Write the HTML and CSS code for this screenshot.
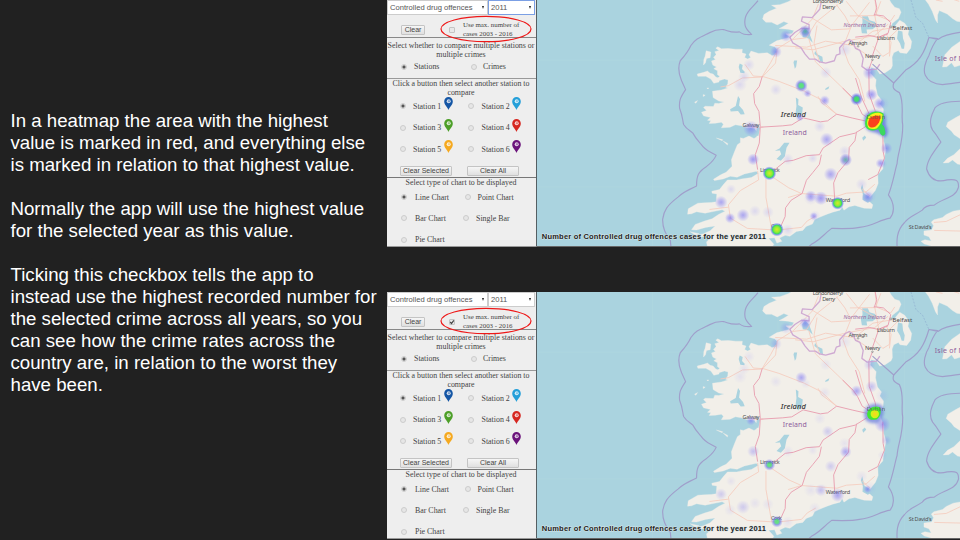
FILE: index.html
```html
<!DOCTYPE html>
<html lang="en">
<head>
<meta charset="utf-8">
<title>Heatmap maximum value</title>
<link rel="stylesheet" href="styles.css">
</head>
<body>
<svg class="defs" width="0" height="0" aria-hidden="true">
  <defs>
    <radialGradient id="faint"><stop offset="0" stop-color="#8078ff" stop-opacity=".2"/><stop offset="1" stop-color="#8078ff" stop-opacity="0"/></radialGradient>
    <radialGradient id="blue"><stop offset="0" stop-color="#6860f5" stop-opacity=".52"/><stop offset=".4" stop-color="#7870f5" stop-opacity=".38"/><stop offset="1" stop-color="#8078ff" stop-opacity="0"/></radialGradient>
    <radialGradient id="green"><stop offset="0" stop-color="#40e860"/><stop offset=".36" stop-color="#48d080"/><stop offset=".55" stop-color="#5a70e0" stop-opacity=".8"/><stop offset="1" stop-color="#8078ff" stop-opacity="0"/></radialGradient>
    <radialGradient id="teal"><stop offset="0" stop-color="#48a890" stop-opacity=".8"/><stop offset=".3" stop-color="#5a8cc0" stop-opacity=".7"/><stop offset=".55" stop-color="#7578e0" stop-opacity=".55"/><stop offset="1" stop-color="#8078ff" stop-opacity="0"/></radialGradient>
    <radialGradient id="yellow"><stop offset="0" stop-color="#d8e828"/><stop offset=".4" stop-color="#90ec34"/><stop offset=".62" stop-color="#3cdc60"/><stop offset=".76" stop-color="#5080e0" stop-opacity=".7"/><stop offset="1" stop-color="#8078ff" stop-opacity="0"/></radialGradient>
    <g id="pin"><path d="M4.500 13C3.700 10 .2 8 .2 4.400a4.300 4.300 0 0 1 8.600 0C8.800 8 5.300 10 4.500 13Z"/><circle cx="4.700" cy="4.200" r="2" fill="#fff" opacity=".8"/><path d="M5 3.300v1.800" stroke="currentColor" stroke-width=".9"/></g>

    <g id="basemap" transform="translate(680 -2) scale(.33333)">
      <path class="tile" d="M-84 0V760M-430 187H840M294 0V760M676 0V760M-430 569H840"/>
      <g class="land">
        <path d="M345 0L325 11L300 20L275 22L290 31L268 40L252 50L248 63L258 73L275 73L292 81L312 71L326 76L310 86L298 92L325 94L342 98L337 108L318 108L330 118L316 122L290 129L268 142L284 147L292 154L291 170L276 173L262 165L236 167L213 160L207 171L212 179L203 184L194 179L198 169L186 165L187 154L166 154L145 152L124 153L113 147L107 151L117 158L104 162L108 170L100 179L106 185L94 190L98 202L109 208L101 213L112 219L112 231L119 236L112 242L114 250L133 244L144 247L143 258L137 269L143 271L124 277L97 281L99 300L116 310L132 313L116 318L104 317L100 327L75 326L70 330L79 339L64 344L70 355L91 360L82 368L92 370L87 378L106 377L124 374L130 380L124 391L150 389L166 382L185 385L202 391L223 392L234 406L230 419L222 423L207 416L190 423L181 421L181 435L172 442L163 464L154 487L156 507L138 525L123 532L100 546L103 550L129 545L151 537L171 540L193 530L229 522L236 528L214 541L184 545L170 548L142 548L130 562L118 577L95 582L96 588L110 590L108 614L93 616L73 617L53 618L24 635L22 651L34 650L49 644L75 648L95 644L126 638L135 642L115 652L96 665L73 672L45 682L34 698L49 699L76 691L105 687L90 701L70 710L35 719L52 724L74 717L94 719L79 735L82 750V760H270L282 742L266 724L284 722L291 738L306 733L299 723L316 715L330 718L350 703L369 700L379 688L398 681L405 667L421 660L442 651L459 645L481 639L488 629L493 639L508 629L526 625L554 633L577 634L580 623L566 610L573 598L588 579L596 559L595 532L610 515L615 477L620 456L612 430L614 410L604 387L599 367L611 350L612 334L601 319L606 307L594 292L588 264L590 246L572 226L575 210L590 213L601 229L617 225L635 213L639 204L638 178L643 165L657 158L662 165L682 167L694 151L697 131L686 109L689 94L676 76L661 67L651 79L642 92L635 90L638 77L657 62L665 43L660 32L646 28L635 14L627 0Z"/>
        <path d="M734 0L748 19L759 40L769 66L775 75L775 51L780 38L804 48L820 62L833 70L845 72V0Z"/>
        <path d="M845 129L818 148L797 171L793 191L790 208L803 207L817 195L826 208L845 202Z"/>
        <path d="M845 352L830 360L806 374L801 387L817 401L825 412L845 425V452L824 472L805 483L792 497L808 496L820 488L835 500L845 502Z"/>
        <path d="M845 638L822 642L801 652L790 661L764 668L756 675L763 686L757 699L734 702L734 714L749 719L756 732L737 728L725 733L735 741L754 746L762 760H845Z"/>
        <path d="M78 159l14 4-2 17-11 2-3 13-6 7 1-17 4-10zM51 229l20-5 11-4 8 7 9 2 8 9 8 3 2 12-16 4-9-13-15-8-24 0zM80 271l6 0-3 3zM109 422l19 5-2 3zM129 431l14 7-1 5z"/>
        <path d="M30 704l27 6-11 5zM43 314l9-5-5 8zM69 291l6 2-6 4z"/>
      </g>
      <g class="water">
        <path d="M548 55l17 0 5 12 17 5 4 13-12 9-18 1 2 12-16-1-3-18 5-14zM656 98l13 3 2 21 5 14-2 17-7 0-5-16-9-14zM343 188l9 0-3 19-4 6-4-19zM348 300l8 5-1 17 14 8-2 19-12 14-8-14 3-24zM313 436l16 0-9 15-5 26-12 13-13-5 14-14-4-12-15 1 14-7zM179 197l9 5-2 12 8 8-1 5-12-2-5-17zM174 295l6 9-3 20 12 13 5 13-12 1-8-11-22 2-2-7 17-10zM406 160l8 10 14 7 2 17-9-4-5-12-12-9zM438 272l11-6-3 8-10 3zM376 91l12 14 7 18 4 12-13-13-17-4-2-14zM548 421l8-7 4 7-9 9zM548 561l7 29 13 7 9 12-12 8-16-9 1-17-6-18zM232 380l9 11-6 25-13-4-15-8 22-3z"/>
      </g>
      <path class="minor" d="M346 150l54 6 92-25 94-18 40-34M416 18l-18 45-58 60-48 30-5 43-40 42-60 3-42 23-24 4M247 236l50 15 77 30 50 25 47 44M288 165l-16 30-25 41M338 125l42-5 30-48 66-53M398 61l57 35 53-3 62-80M387 122l20 70 82 79 41 45M470 20l26 34 18 34-24 61 17 47 32 50 17 66M500 10l34 42 65 36M604 10l-16 43-77 1M530 139l50-39 67-12M580 145l30 31 20-12 0-45 26-25M586 0l6 52 42 17 12-18M620 109l15 24-5 43M586 53l12 65M575 180l-55-37-82-13-57 18-95-5M250 389l-34 0M233 521l3 27-55 32-36 43 6 40 51 31 88 5M258 545l0 55 17 97M270 534l57 38 38 17 107 8 28-9 60-4 26-23M365 589l-40 12M408 657l-25 14-18 20-73 8M145 630l-57 7M547 574l25 24M471 350l-45-34-11-20M790 10l-20-4M840 10l-30-10M764 676l37-3 42-20M765 700l79 2M195 200l25 35 29 2M412 83l-9 53 17 60"/>
      <path class="road" d="M586 0l6 30-8 23M583 50l29 4 22 20-8 32-28 12-20 58M626 108l-29 11-26-6-44 5M579 185l-11 30 1 75 18 49 4 25M247 236l-9 30-17 22 3 30 13 24 4 45-3 50-12 35 7 45M242 389l67-4 27-3 34-21 52 12 22-3 27-20 49 12 45 10M489 271l32 31 13 19 14 29 24 15M528 241l18 59 27 58M562 385l-35 22-47 11-50 34-11 20-40 3-39 14-24 3-45 36M425 472l-6 29-20 25-19 23-13 40-33 20-17 23-1 26-12 27-14 11M531 403l-5 27-17 20-2 38-32 38-13 31 3 48M610 397l1 65 4 20-20 50-29 15"/>
      <path class="border" d="M424 14l-4 20-23 25-29-2-3 13 23 10 0 13-23-2-20 13-15 14 9 17 24 14 13 20 13 15 18 0 12 8 19 4 26-7 6-17 11-4-1-18 17-19 12-6 10 6 9 21 13 6 10 24-4 24 15 11 29-3 10-15"/>
      <path class="sea" d="M234 8C224 23 201 36 196 59C190 86 200 94 215 110C194 111 188 109 178 102C153 106 146 99 130 95C109 94 100 98 87 105C60 118 45 123 32 143C24 161 18 169 0 189C-11 216 -1 236 4 249L16 276C-1 301-4 311-2 332C8 358 6 365 10 381C20 397 31 400 38 407C48 426 54 430 63 441C75 459 84 460 108 474C99 494 86 501 77 509C54 524 49 536 49 566C27 578 10 583-6 599C-40 625-49 639-53 666C-54 690-44 713-30 730L-27 760M579 199L643 256C639 269 640 276 660 285C676 317 664 356 670 382C671 438 655 463 653 499C645 526 641 557 627 593C650 625 642 651 632 663C600 668 582 686 540 691C517 696 491 695 456 694C431 713 420 729 395 742L375 760M643 256L679 217C719 194 735 167 749 119L775 122C765 135 757 149 749 173C738 190 731 218 738 233C747 253 768 260 790 261C809 259 819 257 845 254M749 119L776 125C792 112 811 109 845 103M845 311C811 311 779 317 767 331C758 349 746 374 760 398C774 414 780 427 785 434C761 466 743 491 742 515C753 551 779 555 804 548C832 545 839 549 838 570C831 602 789 603 765 624C750 624 736 627 729 639C704 656 688 659 675 677C651 701 651 731 654 760"/>
      <path class="ferry" d="M695 6L710 59L730 76L749 119"/>
    </g>
    <g id="places">
      <text x="813" y="3.200" textLength="31">Londonderry/</text><text x="822.500" y="9" textLength="13">Derry</text>
      <text class="ni" x="844" y="26.700" textLength="42">Northern Ireland</text>
      <text class="city" x="893" y="30" textLength="20">Belfast</text><text x="877.500" y="40" textLength="18">Lisburn</text>
      <text x="849" y="45.300" textLength="19">Armagh</text><text x="865.500" y="58.300" textLength="15.500">Newry</text>
      <text x="742.500" y="127.400" textLength="17">Galway</text>
      <text x="760" y="173" textLength="20">Limerick</text><text x="826" y="202.500" textLength="24.500">Waterford</text>
      <text x="771" y="229" textLength="11">Cork</text><text x="909.500" y="230.300" textLength="23">St David's</text>
      <text class="country" x="781" y="117.500" textLength="25">Ireland</text><text class="region" x="783" y="135.500" textLength="24">Ireland</text><text class="region" x="935.500" y="60.800" textLength="39">Isle of Man</text>
      <g class="town"><circle cx="891.500" cy="27" r="1"/><circle cx="858.500" cy="46.500" r=".8"/><circle cx="873" cy="60" r=".8"/></g>
    </g>
    <g id="lowheat" fill="url(#faint)">
      <circle cx="776" cy="90" r="6"/><circle cx="825" cy="101" r="6"/><circle cx="806" cy="92" r="5"/><circle cx="820" cy="127" r="6"/><circle cx="813" cy="159" r="5"/><circle cx="744" cy="77" r="6"/><circle cx="740" cy="85" r="7"/><circle cx="754" cy="160" r="6"/><circle cx="826" cy="73" r="6"/><circle cx="845" cy="50" r="7"/><circle cx="811" cy="199" r="7"/><circle cx="768" cy="213" r="6"/><circle cx="815" cy="217" r="6"/><circle cx="731" cy="190" r="5"/><circle cx="755" cy="212" r="6"/><circle cx="788" cy="231" r="6"/><circle cx="788" cy="160" r="6"/><circle cx="845" cy="152" r="6"/><circle cx="862" cy="185" r="6"/><circle cx="870" cy="197" r="7"/><circle cx="749" cy="65" r="6"/><circle cx="883" cy="104" r="7"/><circle cx="883" cy="164" r="5"/><circle cx="822" cy="199" r="7"/><circle cx="730" cy="219" r="6"/><circle cx="872" cy="95" r="6"/>
    </g>
  </defs>
</svg>
<main class="slide">
  <section class="copy">
    <p>In a heatmap the area with the highest<br>value is marked in red, and everything else<br>is marked in relation to that highest value.</p>
    <p>Normally the app will use the highest value<br>for the selected year as this value.</p>
    <p>Ticking this checkbox tells the app to<br>instead use the highest recorded number for<br>the selected crime across all years, so you<br>can see how the crime rates across the<br>country are, in relation to the worst they<br>have been.</p>
  </section>
  <div class="shots">
    <section class="app">
      <div class="panel">
        <div class="selects"><div class="select">Controlled drug offences<i></i></div><div class="select focus">2011<i></i></div></div>
        <div class="clear"><span class="button">Clear</span><span class="check"></span><span class="max"><b>Use max. number of</b><b>cases 2003 - 2016</b></span></div>
        <div class="compare"><p>Select whether to compare multiple stations or</p><p>multiple crimes</p>
          <div class="row modes"><i class="radio on"></i><span>Stations</span><i class="radio"></i><span>Crimes</span></div></div>
        <div class="stations"><p>Click a button then select another station to</p><p>compare</p>
          <div class="row station"><i class="radio on"></i><span>Station 1</span><svg class="pin navy"><use href="#pin"/></svg><i class="radio"></i><span>Station 2</span><svg class="pin sky"><use href="#pin"/></svg></div>
          <div class="row station"><i class="radio"></i><span>Station 3</span><svg class="pin green"><use href="#pin"/></svg><i class="radio"></i><span>Station 4</span><svg class="pin red"><use href="#pin"/></svg></div>
          <div class="row station"><i class="radio"></i><span>Station 5</span><svg class="pin amber"><use href="#pin"/></svg><i class="radio"></i><span>Station 6</span><svg class="pin purple"><use href="#pin"/></svg></div>
          <div class="buttons"><span class="button">Clear Selected</span><span class="button">Clear All</span></div></div>
        <div class="charts"><p>Select type of chart to be displayed</p>
          <div class="row chart"><i class="radio on"></i><span>Line Chart</span><i class="radio"></i><span>Point Chart</span></div>
          <div class="row chart bar"><i class="radio"></i><span>Bar Chart</span><i class="radio"></i><span>Single Bar</span></div>
          <div class="row chart"><i class="radio"></i><span>Pie Chart</span></div></div>
      </div>
      <svg class="map" viewBox="537 0 423 247">
        <use href="#basemap"/><use href="#places"/><use href="#lowheat"/>
        <g fill="url(#blue)"><circle cx="776" cy="52" r="6"/><circle cx="786" cy="36" r="6"/><circle cx="870" cy="73" r="7"/><circle cx="872" cy="95" r="6"/><circle cx="825" cy="101" r="5"/><circle cx="808" cy="94" r="4"/><circle cx="827" cy="140" r="7"/><circle cx="831" cy="175" r="7"/><circle cx="751" cy="129" r="8"/><circle cx="753" cy="160" r="6"/><circle cx="721" cy="203" r="6.500"/><circle cx="743" cy="216" r="6.500"/><circle cx="730" cy="219" r="5"/><circle cx="811" cy="197" r="6"/><circle cx="821" cy="199" r="7"/><circle cx="868" cy="198" r="6"/><circle cx="881" cy="164" r="5"/><circle cx="887" cy="149" r="6"/><circle cx="814" cy="217" r="4"/><circle cx="880" cy="104" r="6"/><circle cx="800" cy="118" r="4"/></g>
        <circle cx="846" cy="160.500" r="6.500" fill="url(#teal)"/><circle cx="805.500" cy="31.500" r="6.500" fill="url(#teal)"/><circle cx="801.500" cy="86" r="6.500" fill="url(#green)" opacity=".85"/><circle cx="857" cy="99.500" r="6.500" fill="url(#green)"/>
        <circle cx="769.500" cy="174" r="7" fill="url(#yellow)"/><circle cx="838" cy="204" r="6.500" fill="url(#yellow)"/><circle cx="777" cy="230.500" r="7" fill="url(#yellow)"/>
        <path class="blob" d="M866 115c5-5 15-5 20 1 1 5-1 8 2 13 1 8-2 11-6 7-4-3-8-3-13-5-5-4-5-11-3-16z" fill="#6579df" opacity=".85"/>
        <path class="glow" d="M880 124c4 0 6 5 6 10-2 4-5 2-6-2-2-3-3-6 0-8z" fill="#3cd860"/>
        <path class="glow" d="M868 116c4-5 12-5 16-2 1 7-2 13-6 16-5 2-10 1-12-3-1-4 0-8 2-11z" fill="#3ee43e"/><path class="glow" d="M869 117c4-4 11-5 14-2 0 6-2 11-6 14-4 1-8 1-9-3-1-3 0-6 1-9z" fill="#f6f01c"/><path class="glow" d="M870 119c3-3 8-4 11-2 0 4-2 8-5 10-3 2-6 1-7-1-1-2 0-5 1-7z" fill="#fa421c"/>
        <text class="city dublin" x="867" y="119.500" textLength="19">Dublin</text>
        <text class="title" x="541" y="240" textLength="225">Number of Controlled drug offences cases for the year 2011</text>
      </svg>
      <svg class="ring" viewBox="0 0 94 30"><ellipse cx="47" cy="15" rx="45" ry="12.700"/></svg>
    </section>
    <section class="app">
      <div class="panel">
        <div class="selects"><div class="select">Controlled drug offences<i></i></div><div class="select">2011<i></i></div></div>
        <div class="clear"><span class="button">Clear</span><span class="check"><svg viewBox="0 0 6 6"><path d="M1.200 3l1.300 1.500L4.800 1.300"/></svg></span><span class="max"><b>Use max. number of</b><b>cases 2003 - 2016</b></span></div>
        <div class="compare"><p>Select whether to compare multiple stations or</p><p>multiple crimes</p>
          <div class="row modes"><i class="radio on"></i><span>Stations</span><i class="radio"></i><span>Crimes</span></div></div>
        <div class="stations"><p>Click a button then select another station to</p><p>compare</p>
          <div class="row station"><i class="radio on"></i><span>Station 1</span><svg class="pin navy"><use href="#pin"/></svg><i class="radio"></i><span>Station 2</span><svg class="pin sky"><use href="#pin"/></svg></div>
          <div class="row station"><i class="radio"></i><span>Station 3</span><svg class="pin green"><use href="#pin"/></svg><i class="radio"></i><span>Station 4</span><svg class="pin red"><use href="#pin"/></svg></div>
          <div class="row station"><i class="radio"></i><span>Station 5</span><svg class="pin amber"><use href="#pin"/></svg><i class="radio"></i><span>Station 6</span><svg class="pin purple"><use href="#pin"/></svg></div>
          <div class="buttons"><span class="button">Clear Selected</span><span class="button">Clear All</span></div></div>
        <div class="charts"><p>Select type of chart to be displayed</p>
          <div class="row chart"><i class="radio on"></i><span>Line Chart</span><i class="radio"></i><span>Point Chart</span></div>
          <div class="row chart bar"><i class="radio"></i><span>Bar Chart</span><i class="radio"></i><span>Single Bar</span></div>
          <div class="row chart"><i class="radio"></i><span>Pie Chart</span></div></div>
      </div>
      <svg class="map" viewBox="537 0 423 247">
        <use href="#basemap"/><use href="#places"/><use href="#lowheat" opacity=".6"/>
        <g fill="url(#blue)"><circle cx="805.500" cy="31.500" r="6"/><circle cx="801.500" cy="86" r="6"/><circle cx="857" cy="99.500" r="6"/><circle cx="846" cy="160.500" r="6"/><circle cx="751" cy="129" r="5"/><circle cx="838" cy="204" r="7"/><circle cx="883" cy="133" r="8"/><circle cx="868" cy="198" r="4"/></g>
        <g fill="url(#blue)" opacity=".5"><circle cx="776" cy="52" r="6"/><circle cx="786" cy="36" r="6"/><circle cx="870" cy="73" r="6"/><circle cx="872" cy="95" r="6"/><circle cx="828" cy="140" r="6"/><circle cx="831" cy="175" r="6"/><circle cx="753" cy="160" r="6"/><circle cx="721" cy="203" r="6"/><circle cx="743" cy="216" r="7"/><circle cx="821" cy="199" r="6"/><circle cx="887" cy="149" r="5"/></g>
        <circle cx="769.500" cy="173.500" r="6" fill="url(#green)" opacity=".8"/><circle cx="777" cy="230.500" r="6" fill="url(#green)" opacity=".8"/>
        <path class="blob" d="M867 116c4-5 14-5 17 0 1 6-1 12-6 16-6 0-12-1-13-6-1-4 0-7 2-10z" fill="#6579df" opacity=".7"/>
        <path class="glow" d="M869 118c4-4 11-4 12-1 1 6-1 9-4 11-5 1-8 0-9-3-1-2 0-5 1-7z" fill="#42e534"/><circle class="glow" cx="875.300" cy="122.500" r="4.200" fill="#d6f018"/><circle cx="875.500" cy="122.500" r="2" fill="#f2da20"/>
        <text class="city dublin" x="867" y="119.500" textLength="19">Dublin</text>
        <text class="title" x="541" y="240" textLength="225">Number of Controlled drug offences cases for the year 2011</text>
      </svg>
      <svg class="ring" viewBox="0 0 94 30"><ellipse cx="47" cy="15" rx="45" ry="12.700"/></svg>
    </section>
  </div>
</main>
</body>
</html>
```
FILE: styles.css
```css
* { box-sizing: border-box; }
body { margin: 0; background: #212121; }
p { margin: 0; }
.defs { position: absolute; }
.slide { display: grid; grid-template-columns: 387px 573px; width: 960px; height: 540px; overflow: hidden; }
.copy { padding: 110px 0 0 10.500px; font: 18.670px/22px "Liberation Sans", Arial, sans-serif; color: #fff; white-space: nowrap; }
.copy p + p { margin-top: 22px; }
.shots { display: flex; flex-direction: column; gap: 45px; }
.app { position: relative; display: grid; grid-template-columns: 150px 423px; height: 247px; flex: none; }
.panel { background: #eee; border-right: 1.500px solid #555f63; border-bottom: 1px solid #999; font: 7.900px/9px "Liberation Serif", "Times New Roman", serif; color: #444; white-space: nowrap; overflow: hidden; }
.panel p { text-align: center; width: 148px; }
.selects { display: grid; grid-template-columns: 101px 47px; height: 15px; }
.select { display: flex; justify-content: space-between; align-items: center; background: #fff; border: 1px solid #ccc; padding: 0 3px 0 2px; font: 7.600px/12px "Liberation Sans", Arial, sans-serif; color: #555; }
.select.focus { border-color: #7b9fe4; }
.select i { border: 1.700px solid transparent; border-top: 3px solid #222; border-bottom: 0; }
.clear { display: grid; grid-template-columns: 24px 29px 60px; height: 23px; padding: 6px 0 0 14px; border-bottom: 1.500px solid #888; align-items: center; }
.clear .check { margin-left: 24px; }
.clear .max { margin-left: 9px; }
.button { display: flex; align-items: center; justify-content: center; height: 10px; border: 1px solid #c4c4c4; border-radius: 1px; background: linear-gradient(#f6f6f6, #e0e0e0); font: 7px/8px "Liberation Sans", Arial, sans-serif; color: #444; }
.check { display: block; width: 6px; height: 6px; border: 1px solid #c4c4c4; border-radius: 1px; background: #e8e8e8; }
.check svg { display: block; width: 6px; height: 6px; margin: -1px; fill: none; stroke: #444; stroke-width: 1.200; }
.max b { display: block; font-weight: normal; font-size: 6.900px; line-height: 8.500px; }
.compare { height: 40.500px; padding-top: 3px; border-bottom: 1.500px solid #999; }
.stations { height: 99px; border-bottom: 1px solid #777; }
.charts { padding-top: 0; }
.row { display: grid; align-items: center; }
.radio { width: 6px; height: 6px; border: 1px solid #ccc; border-radius: 50%; background: #e6e6e6; }
.radio.on { background: radial-gradient(circle, #555 0 1px, #e4e4e4 2.200px); }
.modes { grid-template-columns: 13px 56.500px 12.500px 40px; padding-left: 14px; height: 15px; }
.station { grid-template-columns: 13px 30.500px 24.500px 13.500px 30px 12px; padding-left: 13px; height: 21.500px; }
.stations p + .row { margin-top: -1px; }
.pin { width: 10px; height: 14px; margin-top: -4px; overflow: visible; fill: currentColor; }
.navy { color: #1456a5; }
.sky { color: #249fd9; }
.green { color: #4c9f28; }
.red { color: #d62720; }
.amber { color: #f5a91f; }
.purple { color: #6b137b; }
.buttons { display: grid; grid-template-columns: 52px 52px; column-gap: 15px; padding: 6px 0 0 13px; }
.chart { grid-template-columns: 14px 49.500px 13px 40px; padding-left: 14px; height: 21.300px; }
.chart.bar { grid-template-columns: 14px 47.500px 13.500px 40px; }
.map { display: block; width: 423px; height: 247px; background: #aad3df; border-bottom: 1px solid #666; overflow: hidden; font: 5.600px "Noto Sans", sans-serif; fill: #505050; }
.land { fill: #f2efe9; stroke: #f2efe9; stroke-width: 1; }
.water { fill: #aad3df; }
.tile, .minor, .road, .border, .sea, .ferry { fill: none; stroke-linejoin: round; }
.tile { stroke: #b0d7df; stroke-width: 2; }
.minor { stroke: #f5cbbd; stroke-width: 2.500; }
.road { stroke: #e9a3b3; stroke-width: 3; }
.border { stroke: #cfaad2; stroke-width: 4; }
.sea { stroke: #a09fcb; stroke-width: 3.500; }
.ferry { stroke: #8faed0; stroke-width: 2; stroke-dasharray: 6 4; }
.city { font-size: 6.200px; }
.dublin { opacity: .65; }
.ni { fill: #9b6ba2; font-style: italic; }
.country { fill: #333; font-size: 7.500px; font-style: italic; font-weight: 500; }
.region { fill: #8d5b9b; font-size: 7px; }
.town circle { fill: #eee; stroke: #777; stroke-width: .6; }
.blob { filter: blur(1.500px); }
.glow { filter: blur(.5px); }
.title { font: bold 7.600px "Liberation Sans", Arial, sans-serif; fill: #222; stroke: #d9e6e8; stroke-width: .8; paint-order: stroke; }
.ring { position: absolute; left: 52px; top: 14px; width: 94px; height: 30px; fill: none; stroke: #ee1818; stroke-width: 1.200; }
```
